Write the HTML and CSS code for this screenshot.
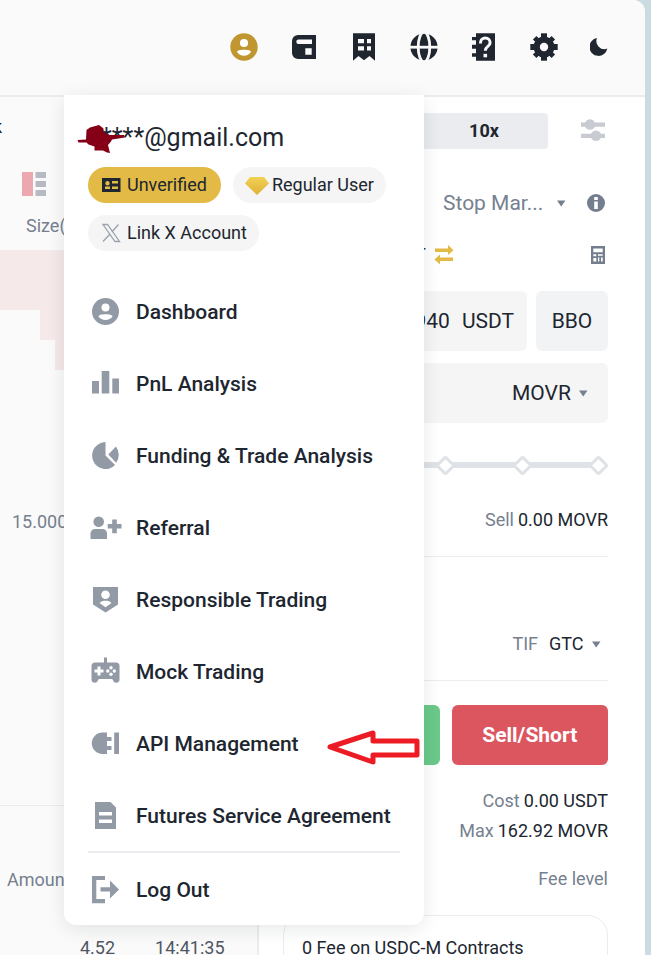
FILE: index.html
```html
<!DOCTYPE html>
<html lang="en">
<head>
<meta charset="utf-8">
<title>Futures Trading</title>
<link rel="stylesheet" href="styles.css">
</head>
<body>
<div class="app">
  <header class="topbar">
    <nav class="tools" aria-label="Account tools">
      <button class="tool tool-active" aria-label="Account"><svg viewBox="0 0 28 28"><circle cx="14" cy="14" r="13.7" fill="currentColor"/><circle cx="14" cy="10" r="4.1" fill="#fff"/><path d="M7 19c0-1.5 3-2.3 7-2.3s7 .8 7 2.3c-1.5 2.4-4 3.7-7 3.7S8.500 21.400 7 19z" fill="#fff"/></svg></button>
      <button class="tool" aria-label="Wallet"><svg viewBox="0 0 28 28"><path fill="currentColor" fill-rule="evenodd" d="M8 2h18v24H8a6 6 0 0 1-6-6V8a6 6 0 0 1 6-6zM8.500 6.500a2 2 0 0 0 0 4.400H22V6.500zM15.300 15.300v6.400h6.400v-6.400z"/></svg></button>
      <button class="tool" aria-label="Orders"><svg viewBox="0 0 28 28"><path fill="currentColor" fill-rule="evenodd" d="M3 .3h22v27.400l-5.500-4.700-5.500 4.300-5.500-4.300L3 27.700zM8 6v4.300h6V6zM17 6v4.300h4V6zM8 13.300v4.300h6v-4.300zM17 13.300v4.300h4v-4.300z"/></svg></button>
      <button class="tool" aria-label="Language"><svg viewBox="0 0 28 28"><circle cx="14" cy="14" r="13.600" fill="currentColor"/><g fill="none" stroke="#fafafa" stroke-width="2.800"><ellipse cx="14" cy="14" rx="5.800" ry="15"/><path d="M0 14.200h28"/></g></svg></button>
      <button class="tool" aria-label="Help"><svg viewBox="0 0 28 28"><path fill="currentColor" d="M6 .3h19v27.400H6v-4H2v-3.400h4v-4.600H2v-4h4V7.300H2V4h4z"/><path d="M10.500 10.500V9.700a4.800 4.800 0 0 1 9.600 0c0 3.800-4.800 3.600-4.800 8" fill="none" stroke="#fafafa" stroke-width="3"/><path d="M13.500 20.800h3.600v3.500h-3.600z" fill="#fafafa"/></svg></button>
      <button class="tool" aria-label="Settings"><svg viewBox="0 0 28 28"><g fill="currentColor"><circle cx="14" cy="14" r="10.500"/><path d="M11 .3h6v27.400h-6z"/><path d="M.3 11h27.400v6H.3z"/><path d="M11.500.8h5v26.400h-5z" transform="rotate(45 14 14)"/><path d="M11.500.8h5v26.400h-5z" transform="rotate(-45 14 14)"/></g><circle cx="14" cy="14" r="4.200" fill="#fafafa"/></svg></button>
      <button class="tool tool-small" aria-label="Dark theme"><svg viewBox="0 0 18 18"><path fill="currentColor" d="M7 0A9 9 0 1 0 17.300 10.500 8 8 0 0 1 7 0z"/></svg></button>
    </nav>

    <div class="menu">
      <div class="email">c****@gmail.com
        <svg class="scribble" viewBox="0 0 50 30"><path fill="#850017" d="M.5 16L9 15.500 9.500 6 13 3.500 22 1l4.500 3.500V8l6 3H47l1 2.500-13 2-1 2-3 3.500 2 8-3-.5-4-2h-8.500v-4l-6-2-2-2h-8z"/></svg>
      </div>
      <div class="pills">
        <a class="pill pill-gold" href="#verify"><svg class="pill-icon" viewBox="0 0 20 20"><path fill="#202630" fill-rule="evenodd" d="M1 3h18.500v14H1zM4 11.500V14h5v-2.500zM6.500 6a2.200 2.200 0 1 0 0 4.400 2.200 2.200 0 0 0 0-4.400zM11 6v2.500h6V6zM11 11.500V14h6v-2.500z"/></svg>Unverified</a>
        <a class="pill pill-tier" href="#tier"><svg class="pill-gem" viewBox="0 0 24 20"><defs><linearGradient id="gem" x2="0" y2="1"><stop stop-color="#f2d154"/><stop offset="1" stop-color="#dfb138"/></linearGradient></defs><path fill="url(#gem)" d="M5 2h14l5 6.500L12 20 0 8.500z"/></svg>Regular User</a>
        <a class="pill" href="#link-x"><svg class="pill-icon" viewBox="0 0 20 20"><path fill="none" stroke="#9aa2ae" stroke-width="1.300" d="M2 1.500h4.500L18.500 18.500H14zM17.500 1.500L10.800 9M8.800 11.200L2 18.500"/></svg>Link X Account</a>
      </div>
      <nav class="items" aria-label="Account menu">
        <a class="item" href="#dashboard"><svg viewBox="0 0 32 32"><circle cx="15.500" cy="15.500" r="13.500" fill="currentColor"/><circle cx="15.500" cy="11.500" r="4" fill="#fff"/><path d="M8.500 20.500c0-1.400 3-2.200 7-2.200s7 .8 7 2.200c-1.500 2.300-4 3.500-7 3.500s-5.500-1.200-7-3.500z" fill="#fff"/></svg>Dashboard</a>
        <a class="item" href="#pnl"><svg viewBox="0 0 32 32"><path fill="currentColor" d="M2 13h7v12.500H2zM11.700 3h7.600v22.500h-7.600zM22.300 10.500H29v15h-6.700z"/></svg>PnL Analysis</a>
        <a class="item" href="#funding"><svg viewBox="0 0 32 32"><path fill="currentColor" d="M15.500 2v13.500l9.600 9.600A13.500 13.500 0 1 1 15.500 2zM18.300 14.500l7.600-8a13.500 13.500 0 0 1 .3 16.200z"/></svg>Funding &amp; Trade Analysis</a>
        <a class="item" href="#referral"><svg viewBox="0 0 32 32"><path fill="currentColor" d="M8.700 4.500a5.300 5.300 0 1 1 0 10.600 5.300 5.300 0 0 1 0-10.600zM.5 27v-5.500a4.500 4.500 0 0 1 4.500-4.500h7.500a4.500 4.500 0 0 1 4.500 4.500V27zM22.200 7.500h4.600v4.600h4.700v4.400h-4.700v4.700h-4.600v-4.700h-4.500v-4.400h4.500z"/></svg>Referral</a>
        <a class="item" href="#responsible"><svg viewBox="0 0 32 32"><path fill="currentColor" d="M3 3h25v17.500L15.500 28.500 3 20.500z"/><circle cx="15.500" cy="10.700" r="4.300" fill="#fff"/><path fill="#fff" d="M9.500 19c1.500-1.600 3.500-2.200 6-2.200s4.500.6 6 2.200l-6 4.200z"/></svg>Responsible Trading</a>
        <a class="item" href="#mock"><svg viewBox="0 0 32 32"><path fill="currentColor" d="M14 1.500h3v5h9a3.500 3.500 0 0 1 3.500 3.500v14a3.300 3.300 0 0 1-6.500 0l-1-1H9l-1 1a3.300 3.300 0 0 1-6.500 0V10A3.500 3.500 0 0 1 5 6.500h9z"/><g fill="#fff"><path d="M7.500 10.500h3V13.500h3v3h-3v3h-3v-3h-3v-3h3z"/><circle cx="21" cy="11.800" r="1.700"/><circle cx="21" cy="18.200" r="1.700"/><circle cx="17.800" cy="15" r="1.700"/><circle cx="24.300" cy="15" r="1.700"/></g></svg>Mock Trading</a>
        <a class="item" href="#api"><svg viewBox="0 0 32 32"><path fill="currentColor" d="M12.500 4.500H17V9h4.500v4H17v5h4.500v4H17v4h-4.500a10.700 10.700 0 0 1 0-21.500zM24.200 4.500H29V26h-4.800z"/></svg>API Management
          <svg class="arrow" viewBox="0 0 94 36"><path fill="#fff" stroke="#ed1c24" stroke-width="5" stroke-linejoin="round" d="M4 18L47 4v8h44v14H47v7z"/></svg></a>
        <a class="item" href="#agreement"><svg viewBox="0 0 32 32"><path fill="currentColor" fill-rule="evenodd" d="M5 2h15.500l5.500 5.500V29H5zM9 12v3.500h13V12zM9 19.500V23h13v-3.500z"/></svg>Futures Service Agreement</a>
      </nav>
      <hr class="menu-rule">
      <a class="item" href="#logout"><svg viewBox="0 0 32 32"><path fill="currentColor" d="M2 2h13v4H6.300v19H15v4.200H2zM20 6.500l9 9-9 9v-7h-9.500v-4.200H20z"/></svg>Log Out</a>
    </div>
  </header>

  <main class="workspace">
    <section class="book">
      <div class="book-tab"><span>k</span></div>
      <div class="book-view"><svg viewBox="0 0 24 24"><path fill="#eda7ae" d="M0 0h11v24H0z"/><path fill="#b7bac3" d="M13.500 0H24v6H13.500zM13.500 9H24v6H13.500zM13.500 18H24v6H13.500z"/></svg></div>
      <div class="book-head">Size(</div>
      <div class="depth depth-a"></div>
      <div class="depth depth-b"></div>
      <div class="depth depth-c"></div>
      <div class="book-size">15.000</div>
      <div class="trades">
        <div class="trades-head">Amount</div>
        <div class="trade"><span>4.52</span><span>14:41:35</span></div>
      </div>
    </section>

    <form class="order">
      <div class="row lever"><button type="button" class="leverage">10x</button><svg class="i24" viewBox="0 0 24 24"><g fill="#c8cbd1"><path d="M0 3.500h24v4.300H0zM0 14.800h24v4.300H0z"/><circle cx="9" cy="5.500" r="5.300"/><circle cx="15" cy="16.800" r="5.300"/></g></svg></div>
      <div class="row kind"><select class="kind-select" aria-label="Order type"><option>Stop Mar...</option></select><svg class="caret" viewBox="0 0 10 8"><path d="M1 1.500h8.500L5.200 7.500z"/></svg><svg class="i18" viewBox="0 0 18 18"><circle cx="9" cy="9" r="9" fill="#757e8f"/><path fill="#fff" d="M7.200 3h3.600v3H7.200zM7.200 7.500h3.600V15H7.200z"/></svg></div>
      <div class="row avail"><span>USDT</span><svg class="i20" viewBox="0 0 20 20"><path fill="#e2ba45" d="M1 3.500h13V0l5.500 5.300L14 10V7H1zM19 12.500H6V9.500L.5 14.500 6 19.500V16h13z"/></svg><svg class="calc" viewBox="0 0 14 18"><path fill="#757e8f" fill-rule="evenodd" d="M0 0h14v18H0zM2.300 2.500v3.700h9.400V2.500zM2.300 8.200v2h3v-2zM7 8.200v1.500h4.700V8.200zM2.300 12v3.500h3V12zM7 11.500v4h1.300v-4zM10 11.500v4h1.700v-4z"/></svg></div>
      <div class="price-row">
        <label class="field"><input class="price" type="text" value="9.940" aria-label="Price"><span>USDT</span></label>
        <button type="button" class="bbo">BBO</button>
      </div>
      <div class="field amount"><select aria-label="Unit"><option>MOVR</option></select><svg class="caret" viewBox="0 0 10 8"><path d="M1 1.500h8.500L5.200 7.500z"/></svg></div>
      <div class="slider"><input type="range" min="0" max="100" value="0" aria-label="Position size"><span class="stops"><i></i><i></i><i></i><i></i><i></i></span></div>
      <p class="line sell"><span>Sell</span><b>0.00 MOVR</b></p>
      <div class="tif"><label for="tif">TIF</label><select id="tif"><option>GTC</option></select><svg class="caret" viewBox="0 0 10 8"><path d="M1 1.500h8.500L5.200 7.500z"/></svg></div>
      <div class="actions"><button type="button" class="buy" aria-label="Buy/Long"></button><button type="button" class="short">Sell/Short</button></div>
      <p class="line"><span>Cost</span><b>0.00 USDT</b></p>
      <p class="line"><span>Max</span><b>162.92 MOVR</b></p>
      <a class="fee" href="#fees">Fee level</a>
      <div class="promo">0 Fee on USDC-M Contracts</div>
    </form>
  </main>
</div>
</body>
</html>
```
FILE: styles.css
```css
* { box-sizing: border-box; }
html, body { height: 100%; }
body {
  margin: 0;
  overflow: hidden;
  background: #cadce1;
  color: #202630;
  font-family: Roboto, "Liberation Sans", sans-serif;
  font-size: 18px;
  line-height: 24px;
}
button, input, select { font: inherit; color: inherit; border: 0; background: none; padding: 0; margin: 0; }
select { appearance: none; outline: 0; }
a { color: inherit; text-decoration: none; }
p { margin: 0; }
svg { display: block; flex: none; }

.app {
  display: flex;
  flex-direction: column;
  min-height: 100%;
  margin-right: 6px;
  border-radius: 0 12px 0 0;
  background: #fff;
}
.topbar {
  position: relative;
  z-index: 2;
  padding: 33px 37px 34px 0;
  border-bottom: 2px solid #eaecef;
  border-radius: 0 12px 0 0;
  background: #fafafa;
}
.tools { display: flex; justify-content: flex-end; align-items: center; gap: 32px; }
.tool { width: 28px; height: 28px; }
.tool svg { width: 100%; }
.tool-active { color: #bf962f; }
.tool-small { width: 18px; height: 18px; }

.menu {
  position: absolute;
  top: 100%;
  left: 64px;
  width: 360px;
  padding: 24px 24px 0;
  border-radius: 0 0 12px 12px;
  background: #fff;
  box-shadow: 0 4px 18px rgba(24, 26, 32, 0.1);
}
.email { position: relative; height: 48px; font-size: 25px; line-height: 38px; }
.scribble { position: absolute; left: -11px; top: 5px; width: 50px; height: 30px; }
.pills { display: flex; flex-wrap: wrap; gap: 12px; }
.pill {
  display: flex;
  align-items: center;
  gap: 5px;
  height: 36px;
  padding: 0 12px;
  border-radius: 18px;
  background: #f5f5f5;
}
.pill-gold { padding-right: 14px; background: #e2ba45; }
.pill-tier { gap: 3px; }
.pill-icon { width: 22px; height: 20px; }
.pill-gem { width: 24px; height: 20px; }
.items { padding-top: 24px; }
.item {
  position: relative;
  display: flex;
  align-items: center;
  gap: 14px;
  height: 72px;
  padding: 2px 0 0 2px;
  font-size: 21px;
  font-weight: 500;
}
.item > svg:first-child { width: 32px; height: 32px; color: #929aa5; }
.item .arrow { position: absolute; left: 238px; top: 22px; width: 94px; height: 36px; }
.menu-rule { height: 2px; margin: 0; border: 0; background: #eaecef; }

.workspace { display: flex; flex: 1; min-height: 0; }
.book {
  width: 259px;
  flex: none;
  border-right: 2px solid #eaecef;
  background: #fafafa;
  color: #76808f;
}
.book-tab { display: flex; justify-content: flex-end; width: 2px; margin-top: 18px; overflow: hidden; color: #202630; }
.book-view { padding: 33px 22px 18px; }
.book-view svg { width: 24px; height: 24px; }
.book-head { height: 36px; padding-left: 26px; }
.depth { height: 30px; background: #f6e9ea; }
.depth-a { height: 60px; }
.depth-b { margin-left: 40px; }
.depth-c { margin-left: 55px; }
.book-size { padding: 140px 0 271px 12px; }
.trades { border-top: 1px solid #eaecef; padding-top: 62px; }
.trades-head { padding-left: 7px; }
.trade { display: flex; gap: 40px; padding: 44px 0 0 80px; color: #4f5663; }

.order { flex: 1; min-width: 0; padding: 16px 37px 0 24px; }
.row { display: flex; align-items: center; justify-content: flex-end; }
.lever { gap: 33px; padding-right: 3px; }
.leverage { width: 128px; height: 36px; border-radius: 4px; background: #eaecef; font-weight: 700; }
.i24 { width: 24px; height: 24px; }
.i18 { width: 18px; height: 18px; }
.i20 { width: 20px; height: 20px; }
.caret { width: 10px; height: 8px; fill: #76808f; }
.kind { margin-top: 40px; padding-right: 3px; height: 28px; gap: 21px; }
.kind-select { color: #76808f; font-size: 21px; margin-right: -9px; }
.avail { justify-content: flex-start; gap: 8px; margin-top: 26px; padding: 0 3px 0 98px; }
.calc { width: 14px; height: 18px; margin-left: auto; }
.price-row { display: flex; gap: 9px; margin-top: 24px; font-size: 21px; }
.field {
  display: flex;
  flex: 1;
  align-items: center;
  gap: 12px;
  min-width: 0;
  height: 60px;
  padding-right: 13px;
  border-radius: 6px;
  background: #f5f5f5;
}
.price { flex: 1; min-width: 0; text-align: right; }
.bbo { width: 72px; border-radius: 6px; background: #f1f3f5; }
.amount { justify-content: flex-end; gap: 7px; margin-top: 12px; padding-right: 20px; font-size: 21px; }
.slider { position: relative; height: 20px; margin-top: 32px; padding: 0 10px; }
.slider input { appearance: none; display: block; width: 100%; height: 20px; }
.slider input::-webkit-slider-runnable-track { height: 6px; background: #dfe2e6; }
.slider input::-webkit-slider-thumb { appearance: none; width: 1px; height: 6px; }
.stops { position: absolute; inset: 0 2px; display: flex; align-items: center; justify-content: space-between; pointer-events: none; }
.stops i { width: 15px; height: 15px; border: 3px solid #dfe2e6; border-radius: 3px; background: #fff; transform: rotate(45deg); }
.line { text-align: right; height: 30px; line-height: 30px; }
.line span { margin-right: 4px; color: #76808f; }
.line b { font-weight: 400; }
.sell { height: 52px; margin-top: 30px; }
.sell, .tif { border-bottom: 1px solid #eaecef; }
.tif { display: flex; align-items: center; justify-content: flex-end; gap: 7px; height: 124px; padding: 50px 7px 0 0; }
.tif label { color: #76808f; margin-right: 4px; }
.actions { display: grid; grid-template-columns: 1fr 1fr; gap: 12px; margin: 24px 0 21px; }
.actions button { height: 60px; border-radius: 6px; color: #fff; font-size: 21px; font-weight: 700; }
.buy { background: #6bc98a; }
.short { background: #dc5660; }
.fee { display: block; margin-top: 21px; text-align: right; color: #76808f; }
.promo { height: 80px; margin-top: 24px; padding: 20px 18px; border: 1px solid #eaecef; border-radius: 20px; }
```
